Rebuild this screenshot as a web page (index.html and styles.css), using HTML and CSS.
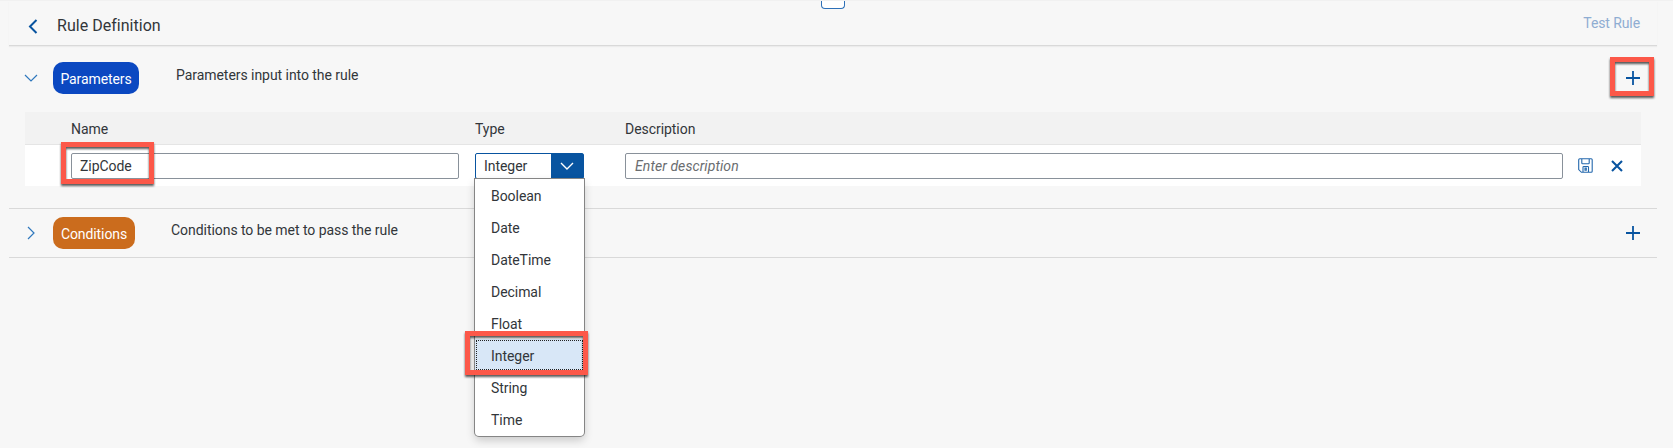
FILE: index.html
```html
<!DOCTYPE html>
<html lang="en">
<head>
<meta charset="utf-8">
<title>Rule Definition</title>
<link rel="stylesheet" href="styles.css">
</head>
<body>
<main class="page">
  <div class="collapse-button"><svg width="22" height="9" viewBox="0 0 22 9"><path d="M5 1l1 2M17 1l-1 2" stroke="#9bbce2" fill="none"/></svg></div>
  <header class="header">
    <svg class="back" width="10" height="15" viewBox="0 0 10 15"><path d="M8.5 1L2 7.5 8.5 14" fill="none" stroke="#0854a0" stroke-width="2"/></svg>
    <h1 class="title">Rule Definition</h1>
    <span class="test-rule">Test Rule</span>
  </header>
  <section class="panel panel-parameters">
    <div class="panel-head">
      <svg class="toggle" width="14" height="14" viewBox="0 0 14 14"><path d="M1 4l6 6 6-6" fill="none" stroke="#2f78bd" stroke-width="1.2"/></svg>
      <span class="pill pill-blue">Parameters</span>
      <span class="summary summary-parameters">Parameters input into the rule</span>
      <span class="add"><svg width="14" height="14" viewBox="0 0 14 14"><path d="M7 0v14M0 7h14" stroke="#0854a0" stroke-width="1.8"/></svg><i class="mark mark-add"></i></span>
    </div>
    <div class="table">
      <div class="row row-head"><span class="cell">Name</span><span class="cell">Type</span><span class="cell">Description</span></div>
      <div class="row row-body">
        <div class="field field-name"><span class="name-text">ZipCode</span><i class="mark mark-name"></i></div>
        <div class="select">
          <span class="select-value">Integer</span>
          <span class="arrow"><svg width="14" height="14" viewBox="0 0 14 14"><path d="M1 4l6 6 6-6" fill="none" stroke="#fff" stroke-width="1.4"/></svg></span>
          <ul class="menu">
            <li class="option">Boolean</li>
            <li class="option">Date</li>
            <li class="option">DateTime</li>
            <li class="option">Decimal</li>
            <li class="option">Float</li>
            <li class="option selected">Integer<i class="mark mark-option"></i></li>
            <li class="option">String</li>
            <li class="option">Time</li>
          </ul>
        </div>
        <div class="field placeholder">Enter description</div>
        <svg class="save" width="15" height="15" viewBox="0 0 15 15" fill="none" stroke="#2468ad" stroke-width="1.1"><path d="M1.8.7h11.4q1 0 1 1v11.6q0 1-1 1H3.4L.7 11.6V1.7q0-1 1.1-1zM3.8.7v4.2q0 .8.8.8h5.8q.8 0 .8-.8V.7M5 14.2V9.3q0-.8.8-.8h3.9q.8 0 .8.8v4.9"/><path d="M7 10v2.2h1.3V10z"/></svg>
        <svg class="close" width="12" height="12" viewBox="0 0 12 12"><path d="M1 1l10 10M11 1L1 11" stroke="#0854a0" stroke-width="2.1"/></svg>
      </div>
    </div>
  </section>
  <section class="panel panel-conditions">
    <div class="panel-head">
      <svg class="toggle" width="14" height="14" viewBox="0 0 14 14"><path d="M4 1l6 6-6 6" fill="none" stroke="#2f78bd" stroke-width="1.2"/></svg>
      <span class="pill pill-orange">Conditions</span>
      <span class="summary">Conditions to be met to pass the rule</span>
      <span class="add"><svg width="14" height="14" viewBox="0 0 14 14"><path d="M7 0v14M0 7h14" stroke="#0854a0" stroke-width="1.8"/></svg></span>
    </div>
  </section>
</main>
</body>
</html>
```
FILE: styles.css
```css
* { box-sizing: border-box; }
body {
  margin: 0;
  background: #f7f7f7;
  color: #32363a;
  font: 14px/20px Roboto, "Noto Sans", sans-serif;
  letter-spacing: -.05px;
}
svg { display: block; flex: none; }
.page {
  position: relative;
  height: 448px;
  padding: 0 16px 0 9px;
  overflow: hidden;
  border-top: 1px solid #f1f1f1;
}
.collapse-button {
  position: absolute;
  left: 821px;
  top: -3px;
  width: 24px;
  height: 11px;
  background: #fff;
  border: 1px solid #2d70b8;
  border-top: 0;
  border-radius: 0 0 4px 4px;
}
.header {
  display: flex;
  align-items: center;
  height: 45px;
  padding: 6px 17px 0 19px;
  border-bottom: 1px solid #d9d9d9;
  box-shadow: 0 1px 1px #ececec;
}
.title { margin: 0 auto 0 19px; font-size: 16px; font-weight: 400; letter-spacing: .03px; }
.test-rule { margin-bottom: 7px; color: #8fadd2; letter-spacing: -.1px; }
.panel { border-bottom: 1px solid #d9d9d9; }
.panel-parameters { height: 163px; }
.panel-conditions { height: 49px; }
.panel-head { display: flex; align-items: center; height: 66px; padding: 0 17px 0 15px; }
.panel-parameters .panel-head { padding-bottom: 2px; }
.panel-conditions .panel-head { height: 48px; }
.pill {
  display: flex;
  align-items: center;
  justify-content: center;
  width: 86px;
  height: 32px;
  margin-left: 15px;
  padding-top: 1px;
  color: #fff;
  letter-spacing: -.1px;
  border-radius: 10px;
}
.pill-blue { background: #0b48c1; }
.pill-orange { width: 82px; background: #cb6c1d; }
.summary { margin: 0 auto 7px 36px; }
.summary-parameters { margin-left: 37px; }
.add { position: relative; }
.table { margin: 0 16px; }
.row { display: grid; align-items: center; padding-left: 46px; }
.row-head { height: 32px; padding-top: 1px; grid-template-columns: 404px 150px 938px; background: #f2f2f2; }
.row-body {
  height: 42px;
  grid-template-columns: 388px 16px 109px 41px 938px 15px 15px 18px 12px;
  background: #fff;
  border-top: 1px solid #e5e5e5;
}
.field {
  position: relative;
  height: 26px;
  padding: 0 8px;
  line-height: 25px;
  background: #fff;
  border: 1px solid #89919a;
  border-radius: 2px;
}
.field-name { grid-column: 1; }
.placeholder { grid-column: 5; padding-left: 9px; color: #6a6d70; font-style: italic; letter-spacing: .08px; }
.save { grid-column: 7; }
.close { grid-column: 9; }
.select {
  grid-column: 3;
  position: relative;
  display: flex;
  justify-content: space-between;
  height: 26px;
  padding-left: 8px;
  line-height: 25px;
  border: 1px solid #0854a0;
  border-radius: 2px;
}
.arrow { display: grid; place-items: center; width: 32px; background: #0854a0; }
.menu {
  position: absolute;
  z-index: 2;
  left: -1px;
  top: 25px;
  width: 109px;
  height: 257px;
  margin: 0;
  padding: 0;
  list-style: none;
  background: #fff;
  border-radius: 0 0 4px 4px;
  box-shadow: 0 0 0 1px #858585, 0 4px 10px rgba(0, 0, 0, .2);
}
.option { position: relative; height: 32px; padding-left: 16px; line-height: 34px; }
.selected { background: #d8e7f7; }
.selected::before { content: ""; position: absolute; inset: 1px; border: 1px dotted #222; }
.mark { position: absolute; z-index: 3; border: 5px solid #fc5849; filter: drop-shadow(0 2px 1px rgba(0, 0, 0, .65)); }
.mark-name { left: -11px; top: -12px; width: 93px; height: 42px; }
.mark-add { left: -16px; top: -14px; width: 44px; height: 39px; }
.mark-option { left: -10px; top: -8px; width: 123px; height: 44px; }
```
